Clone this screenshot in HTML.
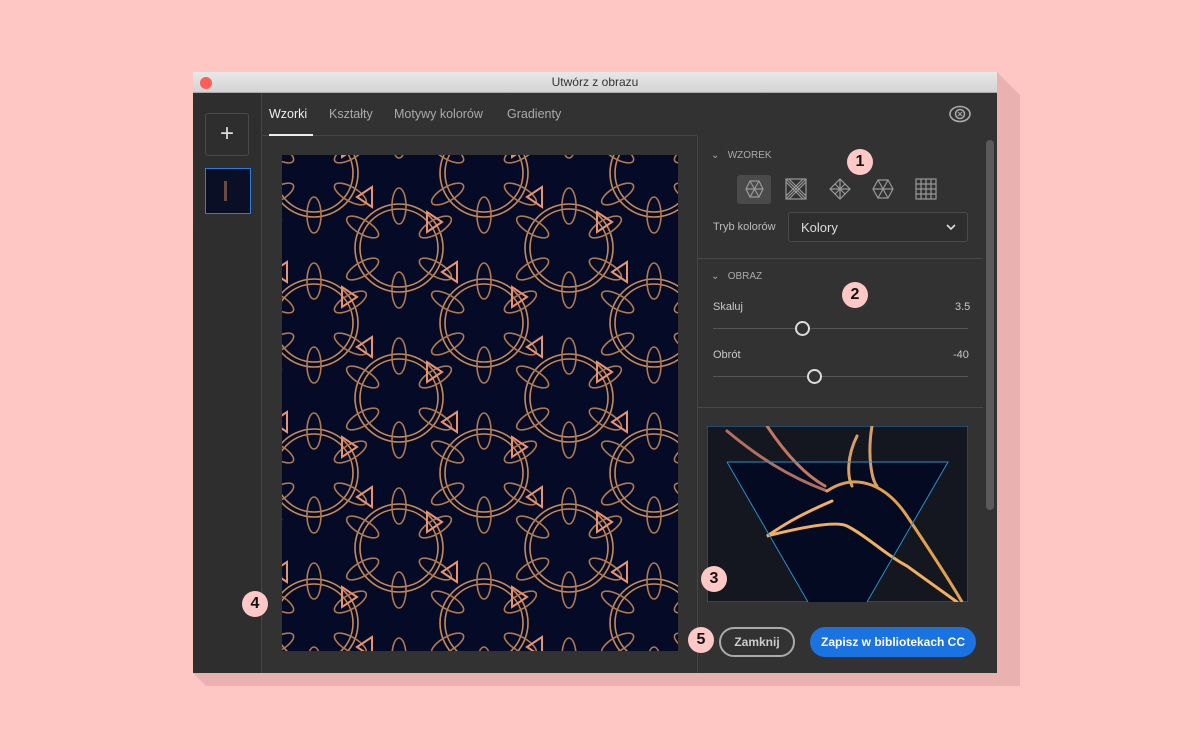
<!DOCTYPE html>
<html><head><meta charset="utf-8"><style>
*{margin:0;padding:0;box-sizing:border-box}
body{width:1200px;height:750px;background:#fec7c4;position:relative;overflow:hidden;font-family:"Liberation Sans",sans-serif}
.a{position:absolute}
.t{color:#c8c8c8;font-size:12.5px}
.badge{position:absolute;width:26px;height:26px;border-radius:50%;background:#fdc8c5;color:#111;font-weight:bold;font-size:16px;text-align:center;line-height:26px}
</style></head><body>
<svg class="a" style="left:0;top:0" width="1200" height="750"><polygon points="997,72 1020,95 1020,686 206,686 193,673 997,673" fill="#e9b1b0"/></svg>
<div class="a" style="left:193px;top:72px;width:804px;height:601px;background:#323232">
 <div class="a" style="left:0;top:0;width:804px;height:21px;background:linear-gradient(#e8e8e8,#d3d3d3);border-bottom:1px solid #aaa"></div>
 <div class="a" style="left:7px;top:5px;width:12px;height:12px;border-radius:50%;background:#fc5f57"></div>
 <div class="a" style="left:0;top:3px;width:804px;text-align:center;font-size:12px;color:#333">Utwórz z obrazu</div>
 <div class="a" style="left:0;top:21px;width:69px;height:580px;background:#2e2e2e;border-right:1px solid #444"></div>
 <div class="a" style="left:12px;top:41px;width:44px;height:43px;border:1px solid #4a4a4a;border-radius:3px;color:#ddd;font-size:24px;text-align:center;line-height:40px">+</div>
 <div class="a" style="left:12px;top:96px;width:46px;height:46px;border:1px solid #2f7bd9;background:#0a0f26"><div class="a" style="left:18px;top:12px;width:3px;height:20px;background:#6a4a40"></div></div>
 <div class="a" style="left:70px;top:63px;width:434px;height:1px;background:#444"></div>
 <div class="a" style="left:76px;top:35px;font-size:12.5px;color:#eee">Wzorki</div>
 <div class="a" style="left:76px;top:62px;width:44px;height:2px;background:#eee"></div>
 <div class="a t" style="left:136px;top:35px;color:#aaa">Kształty</div>
 <div class="a t" style="left:201px;top:35px;color:#aaa">Motywy kolorów</div>
 <div class="a t" style="left:314px;top:35px;color:#aaa">Gradienty</div>
 <svg class="a" style="left:755px;top:32px" width="24" height="20"><ellipse cx="12" cy="10" rx="10" ry="7.5" fill="none" stroke="#aaa" stroke-width="1.6"/><circle cx="12" cy="10" r="4.5" fill="none" stroke="#aaa" stroke-width="1.5"/><path d="M10,8L14,12M14,8L10,12" stroke="#aaa" stroke-width="1"/></svg>
 <div class="a" style="left:504px;top:64px;width:1px;height:537px;background:#444"></div>
</div>
<svg class="a" style="left:282px;top:155px" width="396" height="496">
<defs>
<g id="ring" fill="none" stroke="#c68a58" stroke-width="1.6"><circle r="44"/><circle r="39"/>
<ellipse rx="7" ry="18" transform="translate(0,-42)" stroke="#b07a50"/><ellipse rx="7" ry="18" transform="rotate(60) translate(0,-42)" stroke="#b07a50"/><ellipse rx="7" ry="18" transform="rotate(120) translate(0,-42)" stroke="#b07a50"/><ellipse rx="7" ry="18" transform="rotate(180) translate(0,-42)" stroke="#b07a50"/><ellipse rx="7" ry="18" transform="rotate(240) translate(0,-42)" stroke="#b07a50"/><ellipse rx="7" ry="18" transform="rotate(300) translate(0,-42)" stroke="#b07a50"/></g>
<pattern id="p" width="170" height="150" patternUnits="userSpaceOnUse" x="-10" y="-20">
<rect width="170" height="150" fill="#050b26"/>
<use href="#ring" x="42" y="38"/><use href="#ring" x="127" y="113"/><use href="#ring" x="127" y="-37"/><use href="#ring" x="42" y="188"/><use href="#ring" x="-43" y="113"/><use href="#ring" x="212" y="38"/><use href="#ring" x="212" y="188"/><use href="#ring" x="-43" y="-37"/>
<g fill="none" stroke="#e89270" stroke-width="2">
<polygon points="85,62 100,52 100,72"/><polygon points="0,137 15,127 15,147"/><polygon points="170,137 185,127 185,147"/>
<polygon points="85,12 70,2 70,22"/><polygon points="0,87 -15,77 -15,97"/><polygon points="170,87 155,77 155,97"/>
</g></pattern></defs>
<rect width="396" height="496" fill="url(#p)"/></svg>
<div class="a" style="left:986px;top:140px;width:8px;height:370px;border-radius:4px;background:#5a5a5a"></div>
<div class="a" style="left:697px;top:258px;width:286px;height:1px;background:#484848"></div>
<div class="a" style="left:697px;top:407px;width:286px;height:1px;background:#484848"></div>
<div class="a t" style="left:711px;top:150px;font-size:10px;color:#aaa">⌄&nbsp;&nbsp; WZOREK</div>
<div class="a t" style="left:711px;top:271px;font-size:10px;color:#aaa">⌄&nbsp;&nbsp; OBRAZ</div>
<div class="a" style="left:737px;top:175px;width:34px;height:29px;background:#4a4a4a;border-radius:3px"></div>
<svg class="a" style="left:740px;top:176px" width="200" height="26" fill="none" stroke="#999" stroke-width="1.2">
<polygon points="6,13 10,5 19,5 23,13 19,21 10,21"/><path d="M6,13H23M10,5L19,21M19,5L10,21"/>
<rect x="46" y="3" width="20" height="20"/><path d="M46,3L66,23M66,3L46,23M49,3L66,20M46,6L63,23M63,3L46,20M66,6L49,23"/>
<polygon points="100,3 110,13 100,23 90,13"/><path d="M90,13H110M100,3V23M95,8L105,18M105,8L95,18"/>
<polygon points="138,4 148,4 153,13 148,22 138,22 133,13"/><path d="M133,13H153M138,4L148,22M148,4L138,22"/>
<rect x="176" y="3" width="20" height="20"/><path d="M181,3V23M186,3V23M191,3V23M176,8H196M176,13H196M176,18H196"/></svg>
<div class="a t" style="left:713px;top:221px;font-size:11px;color:#bbb">Tryb kolorów</div>
<div class="a" style="left:788px;top:212px;width:180px;height:30px;border:1px solid #4a4a4a;border-radius:3px;background:#2e2e2e"></div>
<div class="a" style="left:801px;top:220px;font-size:13px;color:#ddd">Kolory</div>
<svg class="a" style="left:945px;top:222px" width="12" height="10"><path d="M2,3L6,7L10,3" fill="none" stroke="#ddd" stroke-width="1.6"/></svg>
<div class="a t" style="left:713px;top:301px;font-size:11px">Skaluj</div>
<div class="a t" style="left:955px;top:301px;font-size:11px">3.5</div>
<div class="a" style="left:713px;top:328px;width:255px;height:1px;background:#555"></div>
<div class="a" style="left:795px;top:321px;width:15px;height:15px;border-radius:50%;border:2px solid #ddd;background:#323232"></div>
<div class="a t" style="left:713px;top:349px;font-size:11px">Obrót</div>
<div class="a t" style="left:953px;top:349px;font-size:11px">-40</div>
<div class="a" style="left:713px;top:376px;width:255px;height:1px;background:#555"></div>
<div class="a" style="left:807px;top:369px;width:15px;height:15px;border-radius:50%;border:2px solid #ddd;background:#323232"></div>
<svg class="a" style="left:707px;top:426px" width="261" height="176">
<rect width="261" height="176" fill="#141620" stroke="#2a7fb8"/>
<polygon points="20,36 241,36 160,176 101,176" fill="#040a22"/>
<g fill="none" stroke-width="3" stroke-linecap="round">
<path d="M20,5C50,30 80,50 120,65" stroke="#b07060"/><path d="M60,0C80,30 100,50 118,60" stroke="#c07860"/>
<path d="M150,10C140,30 140,50 145,60M165,0C160,30 165,55 170,60" stroke="#d8a060"/>
<path d="M120,65C150,45 180,60 200,90C220,120 240,150 255,176" stroke="#e0a050"/>
<path d="M125,75C90,90 75,100 60,110C100,100 130,95 140,100C160,110 180,130 200,140L250,176" stroke="#f0b060"/>
</g>
<path d="M20,36H241L160,176M20,36L101,176" fill="none" stroke="#2a8fc8" stroke-width="1"/></svg>
<div class="a" style="left:719px;top:627px;width:76px;height:30px;border:2px solid #aaa;border-radius:15px;color:#ccc;font-size:12px;font-weight:bold;text-align:center;line-height:26px">Zamknij</div>
<div class="a" style="left:810px;top:627px;width:166px;height:30px;border-radius:15px;background:#1a73e0;color:#fff;font-size:12px;font-weight:bold;text-align:center;line-height:30px">Zapisz w bibliotekach CC</div>
<div class="badge" style="left:847px;top:149px">1</div>
<div class="badge" style="left:842px;top:282px">2</div>
<div class="badge" style="left:701px;top:566px">3</div>
<div class="badge" style="left:242px;top:591px">4</div>
<div class="badge" style="left:688px;top:627px">5</div>
</body></html>
